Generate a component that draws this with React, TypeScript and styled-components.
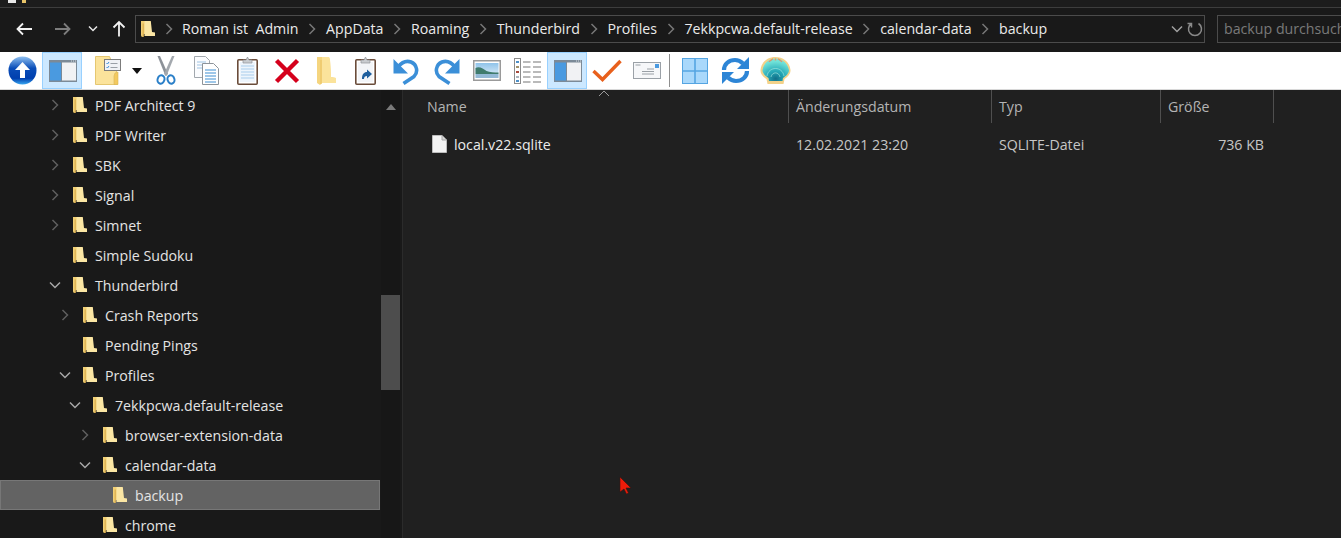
import React from "react";
import styled, { createGlobalStyle } from "styled-components";

const Global = createGlobalStyle`
  html, body { margin: 0; padding: 0; background: #191919; overflow: hidden; }
  #root { width: 1341px; height: 538px; overflow: hidden; }
  * { box-sizing: border-box; }
`;

const Page = styled.div`
  position: relative;
  width: 1341px;
  height: 538px;
  display: flex;
  flex-direction: column;
  font-family: "Open Sans", "Noto Sans", "Liberation Sans", sans-serif;
  font-size: 14.2px;
  color: #e6e6e6;
  background: #191919;
  overflow: hidden;
`;

const TitleStrip = styled.div`
  height: 8px;
  flex: none;
  background: #1c1c1c;
  border-bottom: 1px solid #3d3d3d;
  padding-left: 8px;
  display: flex;
  gap: 6px;
  align-items: flex-start;
`;
const TitleBit = styled.span<{ $c: string; $w: number }>`
  display: block;
  width: ${(p) => p.$w}px;
  height: 3px;
  background: ${(p) => p.$c};
`;

const NavBar = styled.div`
  height: 44px;
  flex: none;
  background: #191919;
  display: flex;
  align-items: flex-start;
  padding-top: 7px;
`;
const NavButtons = styled.div`
  width: 135px;
  height: 27px;
  flex: none;
  display: flex;
  align-items: center;
  padding-left: 15px;
`;
const NavIcon = styled.svg<{ $ml?: number }>`
  flex: none;
  margin-left: ${(p) => p.$ml ?? 0}px;
`;
const AddressBox = styled.div`
  width: 1070px;
  height: 28px;
  flex: none;
  border: 1px solid #4b4b4b;
  display: flex;
  align-items: center;
  padding-left: 5px;
  background: #191919;
`;
const Crumbs = styled.div`
  display: flex;
  align-items: center;
  flex: 1;
  min-width: 0;
  height: 100%;
`;
const Crumb = styled.span`
  white-space: pre;
  color: #ebebeb;
  line-height: 26px;
`;
const CrumbSep = styled.span`
  width: 27.5px;
  flex: none;
  display: flex;
  justify-content: center;
  align-items: center;
`;
const FolderSep = styled(CrumbSep)`
  width: 27px;
`;
const AddressEnd = styled.div`
  width: 48px;
  height: 100%;
  display: flex;
  align-items: center;
  justify-content: flex-end;
  gap: 3px;
  padding-right: 1px;
`;
const SearchBox = styled.div`
  margin-left: 12px;
  width: 124px;
  height: 28px;
  border: 1px solid #4b4b4b;
  border-right: none;
  color: #7a7a7a;
  padding-left: 6px;
  line-height: 26px;
  white-space: nowrap;
  overflow: hidden;
`;

const Toolbar = styled.div`
  height: 38px;
  flex: none;
  background: #fff;
  border-bottom: 1px solid #d8d8d8;
  display: flex;
  padding-left: 2px;
`;
const ToolButton = styled.div<{ $w?: number; $on?: boolean; $pl?: number }>`
  width: ${(p) => p.$w ?? 40}px;
  height: 37px;
  flex: none;
  display: flex;
  align-items: center;
  justify-content: center;
  padding-left: ${(p) => p.$pl ?? 0}px;
  background: ${(p) => (p.$on ? "#cce8ff" : "transparent")};
  border: 1px solid ${(p) => (p.$on ? "#99d1ff" : "transparent")};
`;
const ToolSep = styled.div`
  width: 4px;
  height: 37px;
  flex: none;
  display: flex;
  justify-content: center;
  padding-top: 2px;
  &::before {
    content: "";
    width: 1px;
    height: 33px;
    background: #8f8f8f;
  }
`;

const Body = styled.div`
  flex: 1;
  display: flex;
  min-height: 0;
`;
const TreePanel = styled.div`
  width: 403px;
  flex: none;
  display: flex;
  background: #191919;
  border-right: 1px solid #2b2b2b;
`;
const TreeList = styled.div`
  width: 380px;
  flex: none;
  overflow: hidden;
`;
const TreeRow = styled.div<{ $depth: number; $sel?: boolean }>`
  height: 30px;
  display: flex;
  align-items: center;
  padding-left: ${(p) => 47 + p.$depth * 10}px;
  background: ${(p) => (p.$sel ? "#636363" : "transparent")};
  box-shadow: ${(p) => (p.$sel ? "inset 0 0 0 1px #777" : "none")};
`;
const Expander = styled.span`
  width: 15px;
  height: 16px;
  flex: none;
  display: flex;
  align-items: center;
  justify-content: center;
  margin-right: 11px;
`;
const TreeLabel = styled.span`
  margin-left: 8px;
  color: #e4e4e4;
  white-space: nowrap;
`;
const ScrollBar = styled.div`
  width: 19px;
  flex: none;
  margin-left: 1px;
  background: #171717;
  padding-top: 205px;
  position: relative;
`;
const ScrollUp = styled.span`
  position: absolute;
  left: 5px;
  top: 6px;
  display: block;
`;
const ScrollThumb = styled.div`
  height: 95px;
  background: #4d4d4d;
`;

const FilePanel = styled.div`
  flex: 1;
  background: #202020;
  position: relative;
  padding-left: 17px;
`;
const HeaderRow = styled.div`
  display: grid;
  grid-template-columns: 369px 203px 169px 113px;
  height: 32px;
`;
const HeaderCell = styled.div`
  border-right: 1px solid #4f4f4f;
  padding-left: 7px;
  color: #b4b4b4;
  line-height: 33px;
  white-space: nowrap;
`;
const SortMark = styled.span`
  position: absolute;
  left: 195px;
  top: 0;
  display: block;
  line-height: 0;
`;
const FileRow = styled.div`
  display: grid;
  grid-template-columns: 369px 203px 169px 113px;
  height: 30px;
  margin-top: 7px;
  align-items: center;
`;
const NameCell = styled.div`
  display: flex;
  align-items: center;
  padding-left: 12px;
  gap: 7px;
  color: #ececec;
`;
const MetaCell = styled.div<{ $right?: boolean }>`
  color: #c6c6c6;
  padding-left: 7px;
  text-align: ${(p) => (p.$right ? "right" : "left")};
  padding-right: ${(p) => (p.$right ? "10px" : "0")};
`;
const Pointer = styled.span`
  position: absolute;
  left: 216px;
  top: 387px;
  display: block;
`;

const Chevron = ({ open, c = "#9a9a9a" }: { open?: boolean; c?: string }) => (
  <svg width="14" height="14" viewBox="0 0 14 14" fill="none">
    <path d={open ? "M2 4.5 7 9.5 12 4.5" : "M4.5 2 9.5 7 4.5 12"} stroke={c} strokeWidth="1.5" />
  </svg>
);

const TreeFolder = () => (
  <svg width="14" height="18" viewBox="0 0 14 18">
    <path d="M0 1h9.5l.5 2v11H2.5L2 17 .3 16.5 0 15z" fill="#f2cf73" />
    <path d="M3.5 1H9.5l.5 2 1 9 3 .5V16H3.5z" fill="#fbe6a4" />
    <path d="M2.2 3.5V17" stroke="#d9ae4e" strokeWidth="1.2" />
  </svg>
);

const UpCircle = () => (
  <svg width="29" height="29" viewBox="0 0 29 29">
    <defs>
      <linearGradient id="ug" x1="0" y1="0" x2="0" y2="1">
        <stop offset="0" stopColor="#8fc0f0" />
        <stop offset=".42" stopColor="#0a4db8" />
        <stop offset=".78" stopColor="#003fae" />
        <stop offset="1" stopColor="#39a8f2" />
      </linearGradient>
    </defs>
    <circle cx="14.5" cy="14.5" r="14" fill="url(#ug)" />
    <path d="M14.5 6 22 14h-5v8h-5v-8H7z" fill="#fff" />
  </svg>
);

const PanelIcon = () => (
  <svg width="28" height="22" viewBox="0 0 28 22">
    <rect width="28" height="22" fill="#7c8a97" />
    <rect x="1" y="2.5" width="11" height="18" fill="#4a9ae0" />
    <rect x="13" y="2.5" width="14" height="18" fill="#f1f2f4" />
    <path d="M22 1h1M24 1h1M26 1h1" stroke="#d8dde2" />
  </svg>
);

const FolderTask = () => (
  <svg width="26" height="29" viewBox="0 0 26 29">
    <path d="M.5.5h14l2 5 6 12V28.5h-22z" fill="#fbe39b" stroke="#e5c771" />
    <path d="M20 17l3-1v12.5h-4V20z" fill="#f3c95e" stroke="#d9b558" strokeWidth=".6" />
    <rect x="9.5" y="3.5" width="16" height="11" fill="#f0f2f5" stroke="#7c7c7c" />
    <path d="M11.5 7l1 1 1.5-2M11.5 11l1 1 1.5-2" stroke="#3c8ed8" fill="none" />
    <path d="M15.5 7.5h7M15.5 11.5h7" stroke="#9aa0a6" />
  </svg>
);

const DropArrow = () => (
  <svg width="10" height="6" viewBox="0 0 10 6">
    <path d="M0 0h10L5 6z" fill="#111" />
  </svg>
);

const Scissors = () => (
  <svg width="20" height="29" viewBox="0 0 20 29">
    <path d="M1.500 0 L4 0 L12 18 L9.500 20z" fill="#8c9198" />
    <path d="M18.500 0 L16 0 L8 18 L10.500 20z" fill="#a3a8ae" />
    <ellipse cx="5" cy="23.5" rx="3.4" ry="4.2" fill="none" stroke="#2a7fc8" strokeWidth="2" transform="rotate(18 5 23.5)" />
    <ellipse cx="15" cy="23.5" rx="3.4" ry="4.2" fill="none" stroke="#2a7fc8" strokeWidth="2" transform="rotate(-18 15 23.5)" />
  </svg>
);

const CopyIcon = () => (
  <svg width="25" height="29" viewBox="0 0 25 29">
    <path d="M.5.5h11l4 4v17H.5z" fill="#fbfcfe" stroke="#a2a8ae" />
    <path d="M3 6h9M3 9h9M3 12h6" stroke="#9fc4e4" />
    <path d="M8.5 7.5h11l5 5v16h-16z" fill="#fff" stroke="#8e949a" />
    <path d="M11 14h11M11 17h11M11 20h11M11 23h11M11 26h11" stroke="#3f8fd2" />
  </svg>
);

const PasteIcon = () => (
  <svg width="21" height="29" viewBox="0 0 21 29">
    <rect x=".8" y="3.8" width="19.4" height="24.4" rx="1" fill="#fff" stroke="#6a4c3a" strokeWidth="1.6" />
    <rect x="3" y="6" width="15" height="20" fill="#eef5fc" />
    <path d="M4 10h13M4 13h13M4 16h13M4 19h13M4 22h13" stroke="#a9cdec" />
    <path d="M6 7V4h3l1.5-3 1.5 3h3v3z" fill="#c9ccd0" stroke="#8f9398" strokeWidth=".7" />
  </svg>
);

const RedX = () => (
  <svg width="26" height="26" viewBox="0 0 26 26">
    <path d="M2.5 2.5l21 21M23.5 2.5l-21 21" stroke="#d5001c" strokeWidth="4.4" />
  </svg>
);

const PlainFolder = () => (
  <svg width="19" height="28" viewBox="0 0 19 28">
    <path d="M0 0h12l1 3 1 17 5 1v5H5L3 28 0 26z" fill="#f5d57f" />
    <path d="M5 0h7l1 3 1 17 5 1v5H5z" fill="#fbe39b" />
    <path d="M4 3v24" stroke="#ecc768" strokeWidth="1.2" />
  </svg>
);

const PasteShortcut = () => (
  <svg width="21" height="29" viewBox="0 0 21 29">
    <rect x=".8" y="3.8" width="19.4" height="24.4" rx="1" fill="#fff" stroke="#6a4c3a" strokeWidth="1.6" />
    <rect x="3" y="6" width="15" height="20" fill="#f3f5f8" />
    <path d="M6 7V4h3l1.5-3 1.5 3h3v3z" fill="#c9ccd0" stroke="#8f9398" strokeWidth=".7" />
    <path d="M7 23c0-5 2-7 5-7v-2.5l5 4.500-5 4.500V20c-2 0-3 1-3 3z" fill="#1f5f9e" />
  </svg>
);

const UndoIcon = ({ flip }: { flip?: boolean }) => (
  <svg width="26" height="28" viewBox="0 0 26 28" style={flip ? { transform: "scaleX(-1)" } : undefined}>
    <path d="M5 10C9 5 14 3.500 18 5c6 2.500 7.500 10 3 14.500L10.500 26.500" fill="none" stroke="#3b8fd8" strokeWidth="3.600" />
    <path d="M.5 2V16.500H15z" fill="#3b8fd8" />
  </svg>
);

const PictureIcon = () => (
  <svg width="28" height="21" viewBox="0 0 28 21">
    <defs>
      <linearGradient id="sky" x1="0" y1="0" x2="0" y2="1">
        <stop offset="0" stopColor="#8fc3ea" />
        <stop offset="1" stopColor="#e9f3fa" />
      </linearGradient>
    </defs>
    <rect x=".75" y=".75" width="26.500" height="19.500" fill="#fff" stroke="#9a9a9a" strokeWidth="1.500" />
    <rect x="2.500" y="3" width="23" height="15" fill="url(#sky)" />
    <path d="M2.500 8c4-2 8 1 11 3 3 1.500 8 1.500 12 1.500V14h-23z" fill="#3f7b6d" />
    <rect x="2.500" y="14" width="23" height="4" fill="#93b9d6" />
  </svg>
);

const ListIcon = () => (
  <svg width="27" height="26" viewBox="0 0 27 26">
    <rect x=".5" y=".5" width="6" height="25" fill="#fff" stroke="#8b8b8b" />
    <path d="M2 3h3v2H2z" fill="#4d90c8" />
    <path d="M2 8h3v2H2z" fill="#a0906a" />
    <path d="M2 13h3v2H2z" fill="#a84a3c" />
    <path d="M2 18h3v2H2z" fill="#a9b2bb" />
    <path d="M2 22h3v2H2z" fill="#4d90c8" />
    <path d="M9 4h7.500M19 4h8M9 9h7.500M19 9h8M9 14h7.500M19 14h8M9 19h7.500M19 19h8M9 24h7.500M19 24h8" stroke="#777" strokeWidth="1.200" />
  </svg>
);

const CheckIcon = () => (
  <svg width="30" height="23" viewBox="0 0 30 23">
    <path d="M1.500 12l9 8.500L28.500 2" fill="none" stroke="#e8601c" strokeWidth="3.400" />
  </svg>
);

const MailIcon = () => (
  <svg width="28" height="17" viewBox="0 0 28 17">
    <rect x=".5" y=".5" width="27" height="16" fill="#f6f7f9" stroke="#9ba1a7" />
    <rect x="22" y="2" width="4" height="4" fill="#4a9ae0" />
    <path d="M2.500 3h5M9 9.500h12M9 12h12M14 7h7" stroke="#9aa0a6" />
  </svg>
);

const GridIcon = () => (
  <svg width="26" height="26" viewBox="0 0 26 26">
    <rect x=".5" y=".5" width="25" height="25" fill="#a9d8fb" stroke="#55a5e2" />
    <path d="M13 0v26M0 13h26" stroke="#55a5e2" strokeWidth="1.600" />
  </svg>
);

const RefreshIcon = () => (
  <svg width="29" height="29" viewBox="0 0 29 29">
    <path d="M3 14C3 8 8 4 14 4c3.500 0 6 1.500 8 3.500" fill="none" stroke="#2d85d6" strokeWidth="4.200" />
    <path d="M28 1v12H16z" fill="#2d85d6" />
    <path d="M26 15c0 6-5 10-11 10-3.500 0-6-1.500-8-3.500" fill="none" stroke="#2d85d6" strokeWidth="4.200" />
    <path d="M1 28V16h12z" fill="#2d85d6" />
  </svg>
);

const ShellIcon = () => (
  <svg width="31" height="28" viewBox="0 0 31 28">
    <defs>
      <radialGradient id="sh" cx=".5" cy=".9" r=".95">
        <stop offset="0" stopColor="#126f88" />
        <stop offset=".35" stopColor="#25a8b6" />
        <stop offset=".8" stopColor="#6fe2d8" />
        <stop offset="1" stopColor="#8fdcc8" />
      </radialGradient>
    </defs>
    <path d="M15.500 0c7 0 14 4 15 13 .300 4-3 7-6 9l-1 5H7.500l-1-5c-3-2-6.300-5-6-9C1.500 4 8.500 0 15.500 0z" fill="#f3d28a" />
    <path d="M15.500 1.500c6 0 12 4 13.500 11.500 .200 3-3 6-6 8l-.500 3H9l-.500-3c-3-2-6.200-5-6-8C4 5.500 9.500 1.500 15.500 1.500z" fill="url(#sh)" />
    <path d="M7 19c1.500-10 15.500-10 17 0M11 20c1-5.500 8-5.500 9 0" fill="none" stroke="#b8f0e8" strokeOpacity=".55" />
    <path d="M9 5c1-1.500 2.500-2.500 4-3.300M22 5c-1-1.500-2.500-2.500-4-3.300M15.500 1.500v2" stroke="#e9916a" strokeWidth="1.200" />
  </svg>
);

const FileIcon = () => (
  <svg width="15" height="18" viewBox="0 0 15 18">
    <path d="M.5.5h9.500l4.500 4.500v12.500H.5z" fill="#f4f4f4" stroke="#bdbdbd" />
    <path d="M10 .5V5h4.500" fill="#d5d5d5" stroke="#a8a8a8" />
  </svg>
);

const tree: { label: string; depth: number; exp?: "open" | "closed"; sel?: boolean }[] = [
  { label: "PDF Architect 9", depth: 0, exp: "closed" },
  { label: "PDF Writer", depth: 0, exp: "closed" },
  { label: "SBK", depth: 0, exp: "closed" },
  { label: "Signal", depth: 0, exp: "closed" },
  { label: "Simnet", depth: 0, exp: "closed" },
  { label: "Simple Sudoku", depth: 0 },
  { label: "Thunderbird", depth: 0, exp: "open" },
  { label: "Crash Reports", depth: 1, exp: "closed" },
  { label: "Pending Pings", depth: 1 },
  { label: "Profiles", depth: 1, exp: "open" },
  { label: "7ekkpcwa.default-release", depth: 2, exp: "open" },
  { label: "browser-extension-data", depth: 3, exp: "closed" },
  { label: "calendar-data", depth: 3, exp: "open" },
  { label: "backup", depth: 4, sel: true },
  { label: "chrome", depth: 3 },
];

const crumbs = ["Roman ist  Admin", "AppData", "Roaming", "Thunderbird", "Profiles", "7ekkpcwa.default-release", "calendar-data", "backup"];

export default function App() {
  return (
    <Page>
      <Global />
      <TitleStrip>
        <TitleBit $c="#e8e8e8" $w={8} />
        <TitleBit $c="#e8c468" $w={4} />
      </TitleStrip>
      <NavBar>
        <NavButtons>
          <NavIcon as="svg" width="16" height="14" viewBox="0 0 16 14" fill="none" $ml={1}>
            <path d="M16 7H1.500M7 1.500 1.500 7 7 12.500" stroke="#f2f2f2" strokeWidth="1.800" />
          </NavIcon>
          <NavIcon as="svg" width="16" height="14" viewBox="0 0 16 14" fill="none" $ml={23}>
            <path d="M0 7h14.500M9 1.500 14.500 7 9 12.500" stroke="#7d7d7d" strokeWidth="1.800" />
          </NavIcon>
          <NavIcon as="svg" width="10" height="7" viewBox="0 0 10 7" fill="none" $ml={17}>
            <path d="M1 1.500l4 4 4-4" stroke="#e8e8e8" strokeWidth="1.500" />
          </NavIcon>
          <NavIcon as="svg" width="14" height="17" viewBox="0 0 14 17" fill="none" $ml={14}>
            <path d="M7 16.500V2M1.500 7.500 7 2l5.500 5.500" stroke="#f2f2f2" strokeWidth="1.800" />
          </NavIcon>
        </NavButtons>
        <AddressBox>
          <Crumbs>
            <TreeFolder />
            <FolderSep>
              <Chevron c="#777" />
            </FolderSep>
            {crumbs.map((c, i) => (
              <React.Fragment key={c}>
                {i > 0 && (
                  <CrumbSep>
                    <Chevron c="#777" />
                  </CrumbSep>
                )}
                <Crumb>{c}</Crumb>
              </React.Fragment>
            ))}
          </Crumbs>
          <AddressEnd>
            <Chevron open c="#a0a0a0" />
            <svg width="16" height="16" viewBox="0 0 16 16" fill="none">
              <path d="M4.500 2.500A6.500 6.500 0 1 0 11.500 2.500M4.500 6.500V2.500H0.500" stroke="#8a8a8a" strokeWidth="1.500" />
            </svg>
          </AddressEnd>
        </AddressBox>
        <SearchBox>backup durchsuchen</SearchBox>
      </NavBar>
      <Toolbar>
        <ToolButton><UpCircle /></ToolButton>
        <ToolButton $on $pl={2}><PanelIcon /></ToolButton>
        <ToolButton $w={46} $pl={5}><FolderTask /></ToolButton>
        <ToolButton $w={18}><DropArrow /></ToolButton>
        <ToolButton><Scissors /></ToolButton>
        <ToolButton $w={41}><CopyIcon /></ToolButton>
        <ToolButton><PasteIcon /></ToolButton>
        <ToolButton><RedX /></ToolButton>
        <ToolButton $w={38}><PlainFolder /></ToolButton>
        <ToolButton><PasteShortcut /></ToolButton>
        <ToolButton $w={41}><UndoIcon /></ToolButton>
        <ToolButton $w={41}><UndoIcon flip /></ToolButton>
        <ToolButton><PictureIcon /></ToolButton>
        <ToolButton><ListIcon /></ToolButton>
        <ToolButton $on $pl={2}><PanelIcon /></ToolButton>
        <ToolButton><CheckIcon /></ToolButton>
        <ToolButton><MailIcon /></ToolButton>
        <ToolSep />
        <ToolButton $w={48}><GridIcon /></ToolButton>
        <ToolButton $w={32}><RefreshIcon /></ToolButton>
        <ToolButton $w={48}><ShellIcon /></ToolButton>
      </Toolbar>
      <Body>
        <TreePanel>
          <TreeList>
            {tree.map((t) => (
              <TreeRow key={t.label} $depth={t.depth} $sel={t.sel}>
                <Expander>
                  {t.exp && <Chevron open={t.exp === "open"} c={t.exp === "open" ? "#a8a8a8" : "#5e5e5e"} />}
                </Expander>
                <TreeFolder />
                <TreeLabel>{t.label}</TreeLabel>
              </TreeRow>
            ))}
          </TreeList>
          <ScrollBar>
            <ScrollUp>
              <svg width="10" height="7" viewBox="0 0 10 7">
                <path d="M5 0l5 6H0z" fill="#7a7a7a" />
              </svg>
            </ScrollUp>
            <ScrollThumb />
          </ScrollBar>
        </TreePanel>
        <FilePanel>
          <HeaderRow>
            <HeaderCell>Name</HeaderCell>
            <HeaderCell>Änderungsdatum</HeaderCell>
            <HeaderCell>Typ</HeaderCell>
            <HeaderCell>Größe</HeaderCell>
          </HeaderRow>
          <SortMark>
            <svg width="12" height="7" viewBox="0 0 12 7" fill="none">
              <path d="M1 6l5-5 5 5" stroke="#9a9a9a" />
            </svg>
          </SortMark>
          <FileRow>
            <NameCell>
              <FileIcon />
              local.v22.sqlite
            </NameCell>
            <MetaCell>12.02.2021 23:20</MetaCell>
            <MetaCell>SQLITE-Datei</MetaCell>
            <MetaCell $right>736 KB</MetaCell>
          </FileRow>
          <Pointer>
            <svg width="13" height="17" viewBox="0 0 13 17">
              <path d="M1 0l11 11H7l2.500 5-2 1L5 12l-4 3z" fill="#ee1c0a" stroke="#3a1410" strokeWidth=".6" />
            </svg>
          </Pointer>
        </FilePanel>
      </Body>
    </Page>
  );
}
